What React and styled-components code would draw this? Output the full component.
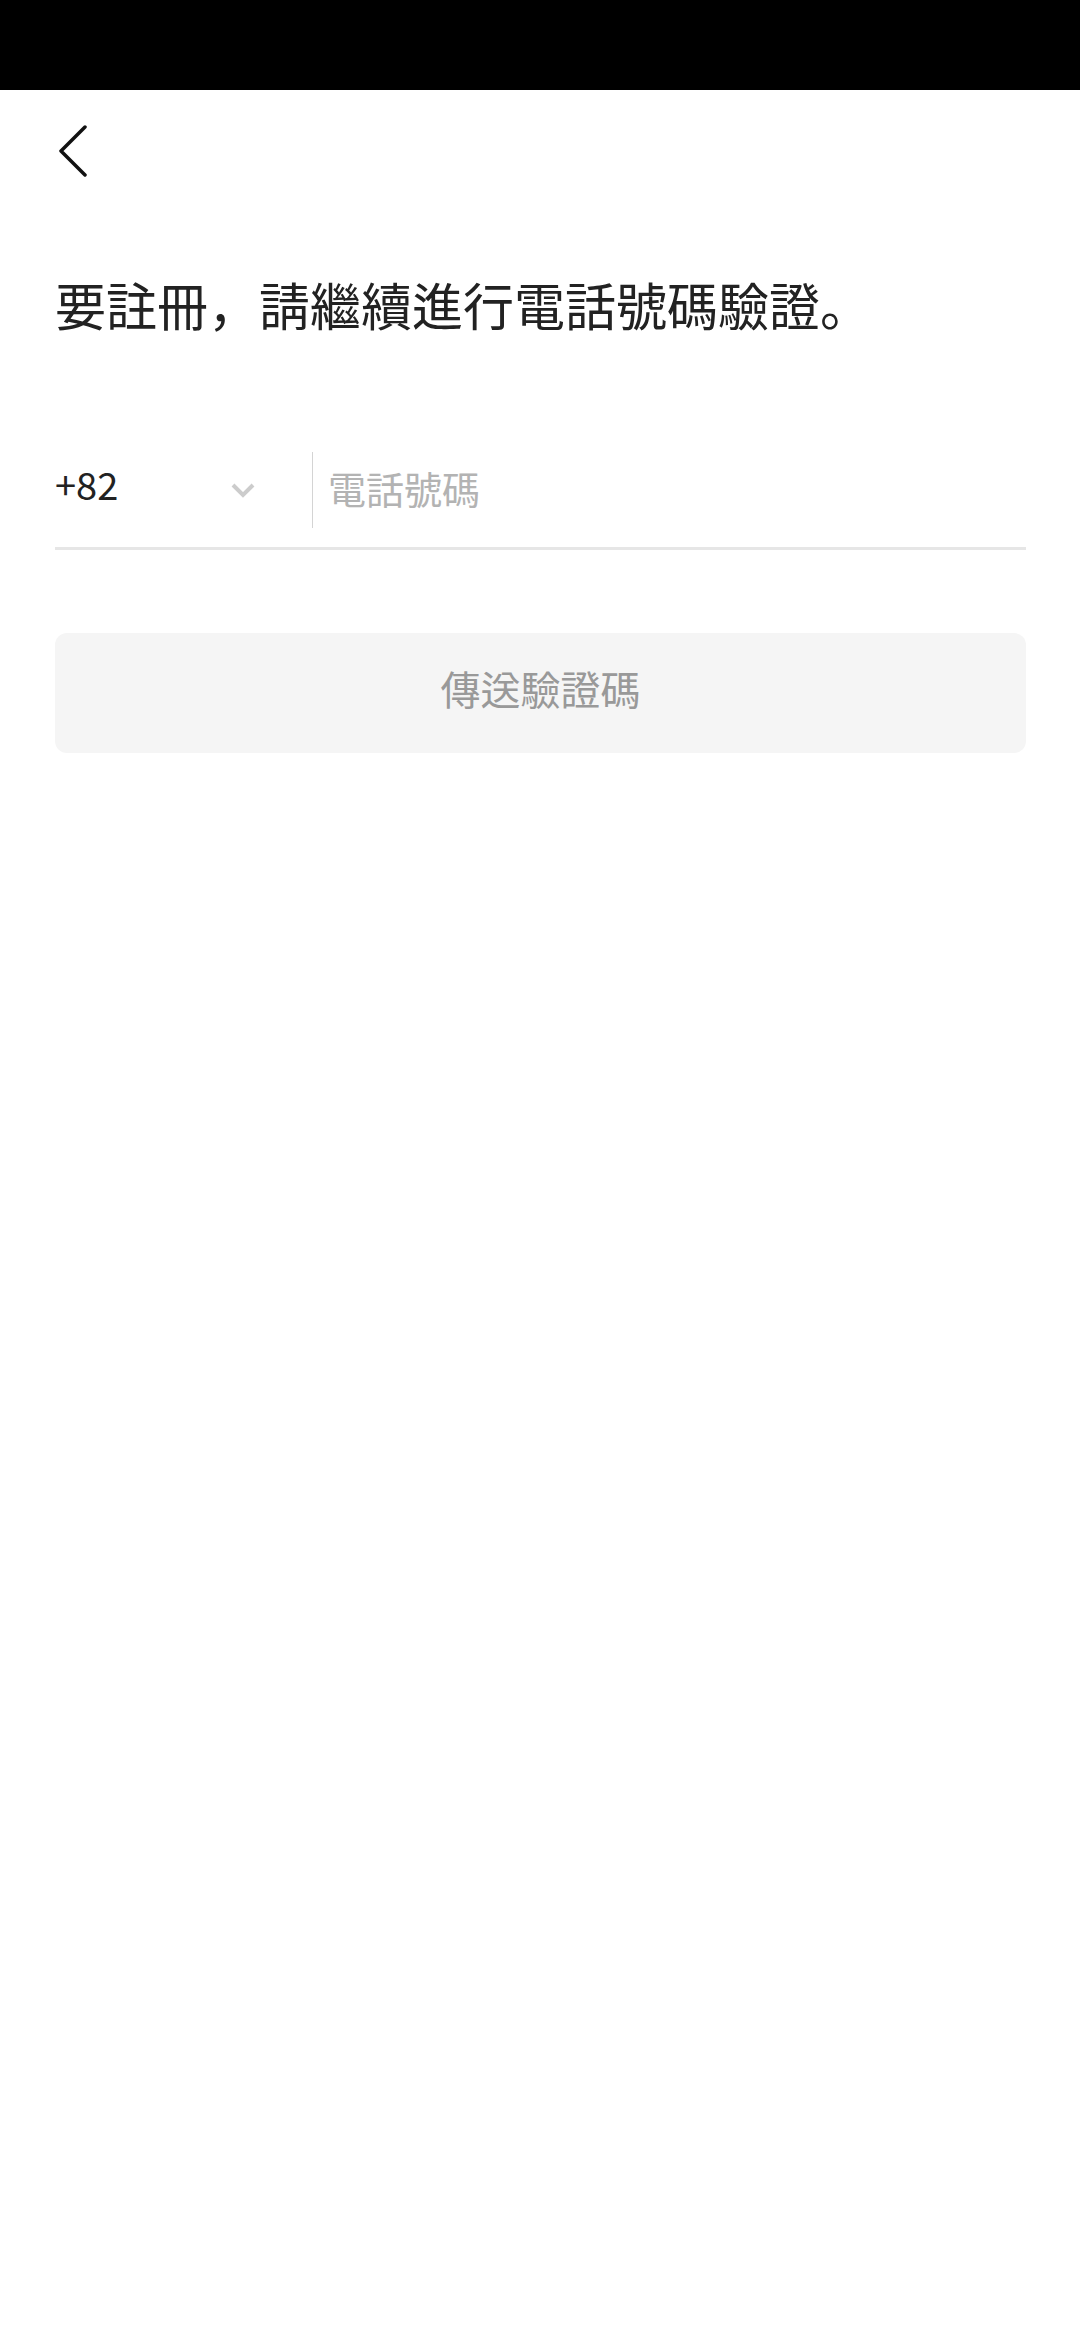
import React, { useState } from 'react'
import styled, { createGlobalStyle } from 'styled-components'

const GlobalStyle = createGlobalStyle`
    html, body {
        margin: 0;
        padding: 0;
        background: #ffffff;
    }
    body {
        font-family: "Noto Sans CJK KR", "Noto Sans CJK TC", "Noto Sans", sans-serif;
        color: #222222;
    }
`

const Screen = styled.div`
    width: 1080px;
    min-height: 2340px;
    background: #ffffff;
    display: flex;
    flex-direction: column;
`

const StatusBar = styled.div`
    height: 90px;
    background: #000000;
    flex-shrink: 0;
`

const Header = styled.div`
    height: 122px;
    display: flex;
    align-items: center;
    padding: 0 55px;
`

const BackButton = styled.button`
    border: none;
    background: transparent;
    padding: 0;
    margin-left: 3px;
    display: flex;
    align-items: center;
    cursor: pointer;
`

const Content = styled.div`
    padding: 0 54px 0 55px;
    display: flex;
    flex-direction: column;
`

const Title = styled.h1`
    margin: 56px 0 0;
    font-size: 51px;
    line-height: 72px;
    font-weight: 400;
    color: #222222;
    letter-spacing: 0;
`

const PhoneRow = styled.div`
    margin-top: 93px;
    height: 114px;
    display: flex;
    align-items: center;
    border-bottom: 3px solid #e6e6e6;
`

const CountrySelect = styled.div`
    width: 257px;
    height: 100%;
    box-sizing: border-box;
    padding-right: 57px;
    display: flex;
    align-items: center;
    justify-content: space-between;
    cursor: pointer;
`

const CountryCode = styled.span`
    font-size: 38px;
    color: #222222;
    margin-bottom: 14px;
`

const Divider = styled.div`
    width: 1px;
    height: 76px;
    background: #d4d4d4;
    flex-shrink: 0;
`

const PhoneInput = styled.input`
    flex: 1;
    min-width: 0;
    border: none;
    outline: none;
    background: transparent;
    padding: 0 0 0 15px;
    margin-bottom: 6px;
    font-family: inherit;
    font-size: 38px;
    color: #222222;

    &::placeholder {
        color: #b3b3b3;
    }
`

const SendButton = styled.button`
    margin-top: 83px;
    height: 120px;
    width: 100%;
    border: none;
    border-radius: 12px;
    padding: 0 0 10px;
    background: ${props => (props.$active ? '#222222' : '#f5f5f5')};
    color: ${props => (props.$active ? '#ffffff' : '#999999')};
    font-family: inherit;
    font-size: 40px;
    cursor: pointer;
`

const BackIcon = () => (
    <svg width="30" height="52" viewBox="0 0 30 52" fill="none">
        <path
            d="M27 2 L3 26 L27 50"
            stroke="#111111"
            strokeWidth="3.5"
            strokeLinecap="round"
            strokeLinejoin="round"
        />
    </svg>
)

const ChevronDown = () => (
    <svg width="24" height="16" viewBox="0 0 24 16" fill="none">
        <path
            d="M2 3 L12 13 L22 3"
            stroke="#cccccc"
            strokeWidth="4"
            strokeLinejoin="miter"
        />
    </svg>
)

export default function App() {
    const [phone, setPhone] = useState('')
    return (
        <Screen>
            <GlobalStyle />
            <StatusBar />
            <Header>
                <BackButton aria-label="back">
                    <BackIcon />
                </BackButton>
            </Header>
            <Content>
                <Title>要註冊，請繼續進行電話號碼驗證。</Title>
                <PhoneRow>
                    <CountrySelect>
                        <CountryCode>+82</CountryCode>
                        <ChevronDown />
                    </CountrySelect>
                    <Divider />
                    <PhoneInput
                        type="tel"
                        placeholder="電話號碼"
                        value={phone}
                        onChange={e => setPhone(e.target.value)}
                    />
                </PhoneRow>
                <SendButton $active={phone.length > 0}>傳送驗證碼</SendButton>
            </Content>
        </Screen>
    )
}
